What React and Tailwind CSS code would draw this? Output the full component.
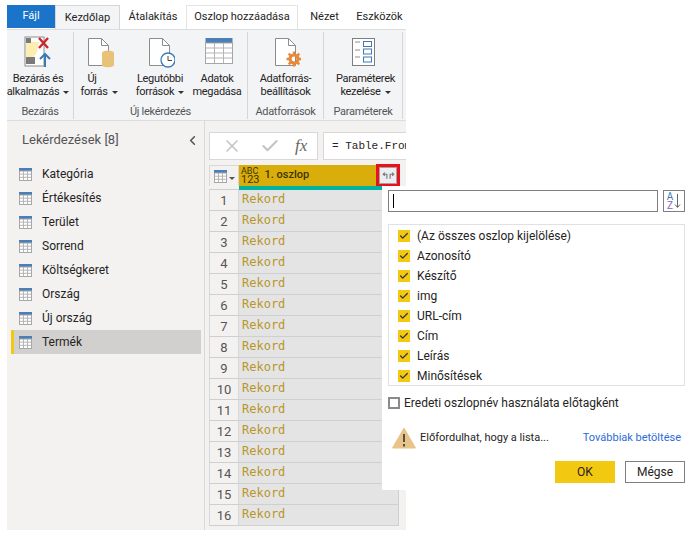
import { Check, ChevronLeft, X } from 'lucide-react';

const queries = ['Kategória', 'Értékesítés', 'Terület', 'Sorrend', 'Költségkeret', 'Ország', 'Új ország', 'Termék'];
const columns = ['(Az összes oszlop kijelölése)', 'Azonosító', 'Készítő', 'img', 'URL-cím', 'Cím', 'Leírás', 'Minősítések'];
const rows = Array.from({ length: 16 }, (_, i) => i + 1);

function TableIcon({ className = 'w-[13px] h-[13px]' }) {
  return (
    <svg viewBox="0 0 13 13" className={`shrink-0 ${className}`}>
      <rect x="0" y="0" width="13" height="3" fill="#4a7fb8" />
      <rect x="0.5" y="3" width="12" height="9.5" fill="#fff" stroke="#a6a6a6" />
      <path d="M4.5 3v9.5M8.5 3v9.5M0.5 6.2h12M0.5 9.3h12" stroke="#b5b5b5" />
    </svg>
  );
}

function Caret() {
  return <span className="inline-block ml-1 align-middle w-0 h-0 border-x-[3px] border-x-transparent border-t-[3px] border-t-[#333]" />;
}

function CloseApplyIcon() {
  return (
    <svg viewBox="0 0 28 32" className="w-[28px] h-[32px]">
      <rect x="1" y="1" width="19" height="29" fill="#fff" stroke="#8c8c8c" />
      <path d="M2 6h5v21H2z" fill="#fbeeb0" />
      <path d="M7 6h8l-2 10-6 8z" fill="#fbeeb0" />
      <rect x="2" y="2" width="5" height="5" fill="#7a7a7a" />
      <rect x="2" y="21" width="9" height="7" fill="#7a7a7a" />
      <path d="M15 2l9 10M24 2l-9 10" stroke="#c8282d" strokeWidth="2.4" />
      <path d="M21 31V18M16 23l5-5 5 5" fill="none" stroke="#3c79b5" strokeWidth="2" />
    </svg>
  );
}

function PageShape({ children }) {
  return (
    <svg viewBox="0 0 30 32" className="w-[30px] h-[32px]">
      <path d="M4.5 2.5h13l7 7v20h-20z" fill="#fff" stroke="#8c8c8c" />
      <path d="M17.5 2.5v7h7" fill="none" stroke="#8c8c8c" />
      {children}
    </svg>
  );
}

function GridIcon() {
  return (
    <svg viewBox="0 0 28 26" className="w-[28px] h-[26px] mt-[2px] ml-[4px]">
      <rect x="0.5" y="0" width="27" height="5" fill="#4a7fb8" />
      <rect x="0.5" y="5" width="27" height="20.5" fill="#fff" stroke="#a6a6a6" />
      <path d="M9.5 5v20M18.5 5v20M1 10h26M1 15h26M1 20h26" stroke="#b5b5b5" />
    </svg>
  );
}

function ParamsIcon() {
  return (
    <svg viewBox="0 0 24 28" className="w-[24px] h-[28px] mt-[2px] -ml-[4px]">
      <rect x="0.5" y="0.5" width="22" height="27" fill="#fff" stroke="#7f7f7f" />
      <path d="M3 4h5M3 12h5M3 19h5" stroke="#8c8c8c" />
      <rect x="11.5" y="3.5" width="8" height="5" fill="none" stroke="#3c79b5" />
      <rect x="11.5" y="11" width="8" height="5" fill="none" stroke="#3c79b5" />
      <rect x="11.5" y="19" width="8" height="5" fill="none" stroke="#3c79b5" />
    </svg>
  );
}

function RibbonButton({ width, icon, line1, line2, caret, line1Class = '' }) {
  return (
    <div className={`flex flex-col items-center shrink-0 ${width}`}>
      <div className="h-[34px] flex items-start justify-center">{icon}</div>
      <div className="text-center leading-[13px] mt-[2px] whitespace-nowrap">
        <div className={line1Class}>{line1}</div>
        <div>{line2}{caret && <Caret />}</div>
      </div>
    </div>
  );
}

function RibbonGroup({ width, label, children }) {
  return (
    <div className={`flex flex-col h-[87px] shrink-0 border-r border-[#d6d6d6] ${width}`}>
      <div className="flex flex-1 pt-[4px]">{children}</div>
      <div className="text-center text-[#555] leading-[13px] pb-[1px] whitespace-nowrap">{label}</div>
    </div>
  );
}

function Tab({ width, children, active, outlined }) {
  return (
    <div className={`flex items-center justify-center shrink-0 whitespace-nowrap ${width} ${active ? 'border-x border-t border-[#d6d6d6] bg-[#f3f4f6] h-[25px]' : 'h-[24px]'} ${outlined ? 'border-x border-t border-[#e4e4e4]' : ''}`}>
      {children}
    </div>
  );
}

function Ribbon() {
  return (
    <>
      <div className="flex h-[24px] mt-[5px] items-start text-[11px] text-[#252423]">
        <div className="flex items-center justify-center shrink-0 w-[48px] h-[23px] bg-[#1a74c9] text-white">Fájl</div>
        <Tab width="w-[65px]" active>Kezdőlap</Tab>
        <Tab width="w-[66px]">Átalakítás</Tab>
        <Tab width="w-[112px]" outlined>Oszlop hozzáadása</Tab>
        <Tab width="w-[53px]">Nézet</Tab>
        <Tab width="w-[57px]">Eszközök</Tab>
      </div>
      <div className="flex h-[92px] bg-[#f3f4f6] border-y border-[#dcdcdc] pt-[2px] text-[11px] tracking-[-0.3px] text-[#252423]">
        <RibbonGroup width="w-[67px]" label="Bezárás">
          <RibbonButton width="w-[62px]" icon={<CloseApplyIcon />} line1="Bezárás és" line2="alkalmazás" caret />
        </RibbonGroup>
        <RibbonGroup width="w-[174px]" label="Új lekérdezés">
          <RibbonButton width="w-[50px]" line1Class="pr-[14px]" icon={<PageShape><ellipse cx="24" cy="17" rx="6" ry="2.5" fill="#e9c27a" /><path d="M18 17v12c0 3 12 3 12 0V17z" fill="#e9c27a" /></PageShape>} line1="Új" line2="forrás" caret />
          <RibbonButton width="w-[72px]" icon={<PageShape><circle cx="23" cy="24" r="7" fill="#fff" stroke="#3c79b5" strokeWidth="1.3" /><path d="M23 20v4.5h4" fill="none" stroke="#444" /></PageShape>} line1="Legutóbbi" line2="források" caret />
          <RibbonButton width="w-[42px]" icon={<GridIcon />} line1="Adatok" line2="megadása" />
        </RibbonGroup>
        <RibbonGroup width="w-[76px]" label="Adatforrások">
          <RibbonButton width="w-[75px]" icon={<PageShape><circle cx="23" cy="23" r="4" fill="none" stroke="#e8893a" strokeWidth="3.2" /><path d="M23 15.5v3M23 27.5v3M15.5 23h3M27.5 23h2.5M17.7 17.7l2 2M26.3 26.3l2 2M17.7 28.3l2-2M26.3 19.7l2-2" stroke="#e8893a" strokeWidth="2.4" /></PageShape>} line1="Adatforrás-" line2="beállítások" />
        </RibbonGroup>
        <RibbonGroup width="w-[79px]" label="Paraméterek">
          <RibbonButton width="w-[78px] pl-[5px]" icon={<ParamsIcon />} line1="Paraméterek" line2="kezelése" caret />
        </RibbonGroup>
      </div>
    </>
  );
}

function Sidebar() {
  return (
    <aside className="w-[198px] shrink-0 bg-[#f3f2f1] border-r border-[#d9d9d9] pl-[4px] pr-[3px]">
      <div className="flex items-center justify-between h-[38px] pl-[11px] pr-[1px] text-[13px] text-[#555]">
        <span>Lekérdezések [8]</span>
        <ChevronLeft size={15} strokeWidth={2.5} className="text-[#555]" />
      </div>
      <div className="mt-[3px] text-[12px] text-[#252423]">
        {queries.map((q) => (
          <div key={q} className={`flex items-center h-[24px] gap-[10px] ${q === 'Termék' ? 'bg-[#d2d0ce] border-l-[3px] border-[#f2c811] pl-[5px]' : 'pl-[8px]'}`}>
            <TableIcon />
            <span>{q}</span>
          </div>
        ))}
      </div>
    </aside>
  );
}

function DataGrid() {
  return (
    <section className="flex-1 min-w-0 bg-[#f3f2f1] pt-[11px] pl-[4px]">
      <div className="flex h-[28px] gap-[5px]">
        <div className="flex items-center shrink-0 w-[109px] bg-white border border-[#d8d8d8] pl-[12px] text-[#c4c4c4]">
          <X size={20} strokeWidth={2} />
          <Check size={20} strokeWidth={2.5} className="ml-[18px]" />
          <span className="ml-[15px] italic text-[17px] text-[#666] [font-family:'Liberation_Serif',serif]">fx</span>
        </div>
        <div className="flex-1 min-w-0 overflow-hidden flex items-center bg-white border border-[#d8d8d8] border-r-0 pl-[8px] text-[11px] text-[#252423] whitespace-nowrap [font-family:'Liberation_Mono',monospace]">
          = Table.FromList
        </div>
      </div>
      <div className="mt-[5px] w-[190px]">
        <div className="flex h-[21px] w-[191px]">
          <div className="flex items-center justify-center shrink-0 w-[30px] bg-[#f3f2f1] border border-[#d8d8d8] border-b-0">
            <TableIcon className="w-[15px] h-[13px]" />
            <span className="ml-[1px] w-0 h-0 border-x-[3px] border-x-transparent border-t-[3px] border-t-[#555] mt-[5px]" />
          </div>
          <div className="relative flex items-center flex-1 bg-[#d9ae0a] pl-[2px] text-[11px] font-medium text-[#3d3300]">
            <div className="font-normal">
              <div className="h-[8px] text-[9px] leading-[8px]">ABC</div>
              <div className="h-[10px] text-[11px] leading-[10px]">123</div>
            </div>
            <span className="ml-[5px]">1. oszlop</span>
            <div className="absolute right-0 -top-px w-[24px] h-[23px] border-[3px] border-[#e81123]">
              <div className="flex items-center justify-center w-full h-full border border-[#a8a48c] bg-[#eceef1]">
                <svg viewBox="0 0 16 10" className="w-[13px] h-[9px]">
                  <path d="M6 9V3.5H1.5M3.5 1.5L1.5 3.5l2 2M10 9V3.5h4.5M12.5 1.5l2 2-2 2" fill="none" stroke="#777" strokeWidth="1.4" />
                </svg>
              </div>
            </div>
          </div>
        </div>
        <div className="relative flex h-[4px] -mb-px w-[191px]">
          <div className="w-[30px]" />
          <div className="flex-1 bg-[#00b3a0]" />
        </div>
        <div className="border-b border-[#cfcfcf]">
          {rows.map((n) => (
            <div key={n} className="flex h-[21px] border-t border-[#cfcfcf]">
              <div className="flex items-center justify-center shrink-0 w-[30px] bg-[#f3f2f1] border-x border-[#d8d8d8] text-[13px] text-[#555] pt-[2px]">{n}</div>
              <div className="flex items-center flex-1 bg-[#e4e4e4] border-r border-[#cfcfcf] pl-[3px] pb-[3px] text-[12px] text-[#b8962a] [font-family:'DejaVu_Sans_Mono',monospace]">Rekord</div>
            </div>
          ))}
        </div>
      </div>
    </section>
  );
}

function ExpandMenu() {
  return (
    <div className="absolute left-[382px] top-[186px] w-[313px] h-[304px] bg-white pl-[6px] pr-[10px] pt-[4px] text-[12px] text-[#252423]">
      <div className="flex gap-[5px] h-[22px]">
        <div className="flex-1 flex items-center border border-[#7f7f7f] pl-[4px]">
          <div className="w-px h-[14px] bg-black" />
        </div>
        <div className="flex items-center justify-center gap-[1px] w-[22px] border border-[#7f7f7f]">
          <div className="text-center">
            <div className="h-[9px] text-[10px] leading-[9px] text-[#3c79b5]">A</div>
            <div className="h-[9px] text-[10px] leading-[9px] text-[#8c5fb5]">Z</div>
          </div>
          <svg viewBox="0 0 7 16" className="w-[7px] h-[16px]">
            <path d="M3.5 1v13M1 11.5l2.5 3 2.5-3" fill="none" stroke="#666" />
          </svg>
        </div>
      </div>
      <div className="mt-[12px] h-[162px] border border-[#e1e1e1] pl-[9px] pt-[1px]">
        {columns.map((c) => (
          <div key={c} className="flex items-center h-[20px] gap-[7px]">
            <span className="flex items-center justify-center w-[12px] h-[12px] bg-[#f2c811]">
              <Check size={10} strokeWidth={3} className="text-[#333]" />
            </span>
            <span>{c}</span>
          </div>
        ))}
      </div>
      <div className="flex items-center gap-[4px] h-[18px] mt-[8px]">
        <span className="w-[12px] h-[12px] border-2 border-[#8a8a8a]" />
        <span>Eredeti oszlopnév használata előtagként</span>
      </div>
      <div className="flex items-center h-[24px] mt-[14px] pl-[4px] pr-[4px] text-[11px]">
        <svg viewBox="0 0 24 22" className="w-[24px] h-[22px]">
          <path d="M12 1l11.5 20H.5z" fill="#e9c48a" stroke="#e9c48a" strokeLinejoin="round" />
          <path d="M12 7v8M12 17v2.5" stroke="#444" strokeWidth="1.8" />
        </svg>
        <span className="ml-[4px]">Előfordulhat, hogy a lista...</span>
        <span className="ml-auto text-[#2b6cd6]">Továbbiak betöltése</span>
      </div>
      <div className="flex justify-end gap-[10px] mt-[11px]">
        <div className="flex items-center justify-center w-[60px] h-[22px] bg-[#f2c811]">OK</div>
        <div className="flex items-center justify-center w-[60px] h-[22px] border border-[#7f7f7f]">Mégse</div>
      </div>
    </div>
  );
}

export default function App() {
  return (
    <div className="relative w-[695px] h-[537px] overflow-hidden bg-white [font-family:Roboto,sans-serif]">
      <div className="flex flex-col w-[399px] h-[530px] ml-[7px]">
        <Ribbon />
        <div className="flex flex-1 min-h-0">
          <Sidebar />
          <DataGrid />
        </div>
      </div>
      <ExpandMenu />
    </div>
  );
}
